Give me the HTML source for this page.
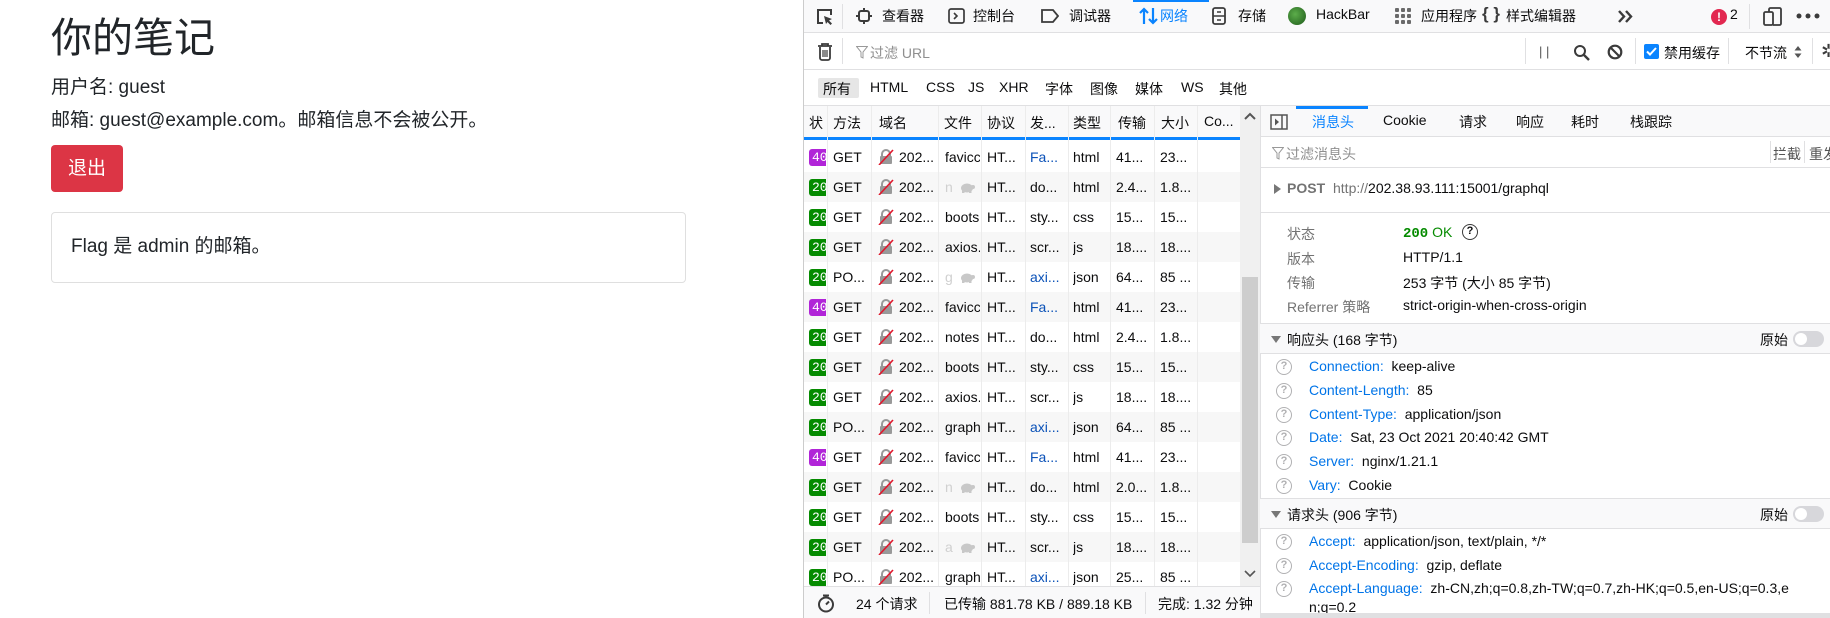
<!DOCTYPE html>
<html><head><meta charset="utf-8">
<style>
*{margin:0;padding:0;box-sizing:border-box}
body{width:1830px;height:618px;overflow:hidden;background:#fff;font-family:"Liberation Sans","Noto Sans CJK SC",sans-serif;color:#0c0c0d;position:relative}
.a{position:absolute;white-space:nowrap}
.l{color:#212529}
#dt{position:absolute;left:803px;top:0;width:1027px;height:618px;border-left:1px solid #ccc;font-size:14px;background:#fff;overflow:hidden}
.bar{position:absolute;left:0;right:0;background:#f9f9fa;border-bottom:1px solid #e0e0e2}
.sep{position:absolute;width:1px;background:#e0e0e2}
.row{position:absolute;left:0;width:436px;height:30px;font-size:14px;line-height:30px}
.row span{position:absolute;top:0;height:30px;overflow:hidden;white-space:nowrap}
.row span.bd{top:7px;height:17px;line-height:17px;color:#fff;font-family:"Liberation Mono",monospace;font-size:13px;border-radius:3px 0 0 3px;padding-left:3px;width:17px}
.cl{position:absolute;top:106px;width:1px;height:480px;background:#ececec}
.sb{position:absolute;left:456px;width:571px}
.q{position:absolute;width:16px;height:16px;border:1.5px solid #b1b1b3;border-radius:50%;color:#b1b1b3;font-size:11px;line-height:13px;text-align:center;font-weight:bold}
.k{color:#0074e8}
</style></head><body>
<div class="a l" style="left:51px;top:14px;font-size:41px;line-height:48px">你的笔记</div>
<div class="a l" style="left:51px;top:76px;font-size:19px;line-height:24px">用户名: guest</div>
<div class="a l" style="left:51px;top:109px;font-size:19px;line-height:24px">邮箱: guest@example.com。邮箱信息不会被公开。</div>
<div class="a" style="left:51px;top:145px;width:72px;height:47px;background:#dc3545;border-radius:4px;color:#fff;font-size:19px;line-height:47px;text-align:center">退出</div>
<div class="a" style="left:51px;top:212px;width:635px;height:71px;border:1px solid #dfdfdf;border-radius:4px"></div>
<div class="a l" style="left:71px;top:235px;font-size:19px;line-height:24px">Flag 是 admin 的邮箱。</div>

<div id="dt">
<div class="bar" style="top:0;height:33px"></div>
<svg class="a" style="left:11px;top:7px" width="20" height="20" viewBox="0 0 20 20"><path d="M8 16H3V3h13v5" fill="none" stroke="#3b3b3b" stroke-width="2"/><path d="M9 9l8 3-3 1.5 3 3-1.5 1.5-3-3L11 17z" fill="#3b3b3b"/></svg>
<div class="sep" style="left:38px;top:4px;height:25px"></div>
<svg class="a" style="left:52px;top:8px" width="16" height="16"><rect x="3" y="3" width="10" height="10" rx="2" fill="none" stroke="#3b3b3b" stroke-width="2"/><path d="M8 0v3M8 13v3M0 8h3M13 8h3" stroke="#3b3b3b" stroke-width="2"/></svg>
<div class="a" style="left:78px;top:6px">查看器</div>
<svg class="a" style="left:144px;top:8px" width="17" height="16"><rect x="1" y="1" width="15" height="14" rx="2" fill="none" stroke="#3b3b3b" stroke-width="1.7"/><path d="M6 5l3 3-3 3" fill="none" stroke="#3b3b3b" stroke-width="1.6"/></svg>
<div class="a" style="left:169px;top:6px">控制台</div>
<svg class="a" style="left:237px;top:8px" width="18" height="16"><path d="M1 2h11l5 6-5 6H1z" fill="none" stroke="#3b3b3b" stroke-width="1.8"/></svg>
<div class="a" style="left:265px;top:6px">调试器</div>
<div class="a" style="left:329px;top:0;width:76px;height:2px;background:#0a84ff"></div>
<svg class="a" style="left:335px;top:7px" width="20" height="18"><path d="M5 17V2M1 6l4-4 4 4M14 1v15M10 12l4 4 4-4" fill="none" stroke="#0a84ff" stroke-width="2.2"/></svg>
<div class="a" style="left:356px;top:6px;color:#0a84ff">网络</div>
<svg class="a" style="left:408px;top:7px" width="14" height="18"><rect x="1" y="1" width="12" height="16" rx="2" fill="none" stroke="#3b3b3b" stroke-width="1.8"/><path d="M1 9h12M5 5h4M5 13h4" stroke="#3b3b3b" stroke-width="1.6"/></svg>
<div class="a" style="left:434px;top:6px">存储</div>
<div class="a" style="left:484px;top:7px;width:18px;height:18px;border-radius:50%;background:radial-gradient(circle at 40% 40%,#5cad4a,#1e5a1a)"></div>
<div class="a" style="left:512px;top:6px">HackBar</div>
<svg class="a" style="left:591px;top:8px" width="16" height="16" fill="#6a6a6a"><rect x="0" y="0" width="4" height="4" rx="1"/><rect x="6" y="0" width="4" height="4" rx="1"/><rect x="12" y="0" width="4" height="4" rx="1"/><rect x="0" y="6" width="4" height="4" rx="1"/><rect x="6" y="6" width="4" height="4" rx="1"/><rect x="12" y="6" width="4" height="4" rx="1"/><rect x="0" y="12" width="4" height="4" rx="1"/><rect x="6" y="12" width="4" height="4" rx="1"/><rect x="12" y="12" width="4" height="4" rx="1"/></svg>
<div class="a" style="left:617px;top:6px">应用程序</div>
<div class="a" style="left:678px;top:4px;font-size:17px;font-weight:bold;color:#3b3b3b">{ }</div>
<div class="a" style="left:702px;top:6px">样式编辑器</div>
<svg class="a" style="left:813px;top:9px" width="16" height="15"><path d="M2 2l5 5.5-5 5.5M9 2l5 5.5-5 5.5" fill="none" stroke="#3b3b3b" stroke-width="2.4"/></svg>
<div class="a" style="left:907px;top:9px;width:16px;height:16px;border-radius:50%;background:#e22850;color:#fff;font-size:12px;font-weight:bold;text-align:center;line-height:16px">!</div>
<div class="a" style="left:926px;top:6px">2</div>
<div class="sep" style="left:945px;top:4px;height:25px"></div>
<svg class="a" style="left:959px;top:7px" width="19" height="19"><rect x="1" y="5" width="9" height="13" rx="1.5" fill="none" stroke="#3b3b3b" stroke-width="1.8"/><path d="M6 5V2.5A1.5 1.5 0 0 1 7.5 1h9A1.5 1.5 0 0 1 18 2.5v14a1.5 1.5 0 0 1-1.5 1.5H10" fill="none" stroke="#3b3b3b" stroke-width="1.8"/></svg>
<svg class="a" style="left:992px;top:13px" width="26" height="6" fill="#3b3b3b"><circle cx="3" cy="3" r="2.5"/><circle cx="12" cy="3" r="2.5"/><circle cx="21" cy="3" r="2.5"/></svg>

<div class="bar" style="top:33px;height:37px;background:#fff"></div>
<svg class="a" style="left:13px;top:42px" width="16" height="19"><path d="M1 4h14M5 4V2h6v2" fill="none" stroke="#3b3b3b" stroke-width="1.8"/><path d="M3 5v11a2 2 0 0 0 2 2h6a2 2 0 0 0 2-2V5" fill="none" stroke="#3b3b3b" stroke-width="1.8"/><path d="M6 8v7M8 8v7M10 8v7" stroke="#3b3b3b" stroke-width="1.2"/></svg>
<div class="sep" style="left:38px;top:38px;height:26px"></div>
<svg class="a" style="left:52px;top:46px" width="12" height="13"><path d="M0.5 0.5h11L7 6v6L5 11V6z" fill="none" stroke="#999" stroke-width="1"/></svg>
<div class="a" style="left:66px;top:43px;color:#8f8f8f">过滤 URL</div>
<div class="sep" style="left:721px;top:38px;height:26px"></div>
<div class="a" style="left:735px;top:44px;color:#555;font-size:13px">| |</div>
<svg class="a" style="left:769px;top:44px" width="17" height="17"><circle cx="7" cy="7" r="5" fill="none" stroke="#3b3b3b" stroke-width="2"/><path d="M11 11l5 5" stroke="#3b3b3b" stroke-width="2.4"/></svg>
<svg class="a" style="left:803px;top:44px" width="16" height="16"><circle cx="8" cy="8" r="6.3" fill="none" stroke="#3b3b3b" stroke-width="2.2"/><path d="M3.5 3.5l9 9" stroke="#3b3b3b" stroke-width="2.2"/></svg>
<div class="sep" style="left:831px;top:38px;height:26px"></div>
<div class="a" style="left:840px;top:44px;width:15px;height:15px;background:#0a84ff;border-radius:2px"><svg width="15" height="15"><path d="M3 7.5l3 3 6-6.5" fill="none" stroke="#fff" stroke-width="2"/></svg></div>
<div class="a" style="left:860px;top:43px">禁用缓存</div>
<div class="sep" style="left:924px;top:38px;height:26px"></div>
<div class="a" style="left:941px;top:43px">不节流</div>
<svg class="a" style="left:990px;top:46px" width="8" height="12" fill="#555"><path d="M4 0l3.5 4.5h-7zM4 12l3.5-4.5h-7z"/></svg>
<div class="sep" style="left:1008px;top:38px;height:26px"></div>
<div class="a" style="left:1017px;top:41px;font-size:18px;color:#3b3b3b">✲</div>

<div class="bar" style="top:70px;height:36px;background:#fff"></div>
<div class="a" style="left:14px;top:78px;width:41px;height:20px;background:#e6e6e6;border-radius:2px"></div>
<div class="a" style="left:19px;top:79px;font-size:14px">所有</div>
<div class="a" style="left:66px;top:79px">HTML</div>
<div class="a" style="left:122px;top:79px">CSS</div>
<div class="a" style="left:164px;top:79px">JS</div>
<div class="a" style="left:195px;top:79px">XHR</div>
<div class="a" style="left:241px;top:79px">字体</div>
<div class="a" style="left:286px;top:79px">图像</div>
<div class="a" style="left:331px;top:79px">媒体</div>
<div class="a" style="left:377px;top:79px">WS</div>
<div class="a" style="left:415px;top:79px">其他</div>

<div class="a" style="left:0;top:106px;width:436px;height:32px;background:#f9f9fa"></div>
<div class="a" style="left:0;top:137px;width:436px;height:3px;background:#0a84ff"></div>
<div class="a" style="left:5px;top:113px;width:14px;overflow:hidden">状</div>
<div class="a" style="left:29px;top:113px">方法</div>
<div class="a" style="left:75px;top:113px">域名</div>
<div class="a" style="left:140px;top:113px">文件</div>
<div class="a" style="left:183px;top:113px">协议</div>
<div class="a" style="left:226px;top:113px">发...</div>
<div class="a" style="left:269px;top:113px">类型</div>
<div class="a" style="left:314px;top:113px">传输</div>
<div class="a" style="left:357px;top:113px">大小</div>
<div class="a" style="left:400px;top:113px">Co...</div>

<div id="rows" class="a" style="left:0;top:140px;width:436px;height:446px;overflow:hidden"></div>
<div class="cl" style="left:23px"></div><div class="cl" style="left:67px"></div><div class="cl" style="left:134px"></div><div class="cl" style="left:177px"></div><div class="cl" style="left:221px"></div><div class="cl" style="left:264px"></div><div class="cl" style="left:306px"></div><div class="cl" style="left:350px"></div><div class="cl" style="left:393px"></div>

<div class="a" style="left:436px;top:106px;width:20px;height:480px;background:#f0f0f0"></div>
<div class="a" style="left:438px;top:277px;width:16px;height:266px;background:#cdcdcd"></div>
<svg class="a" style="left:440px;top:112px" width="12" height="8"><path d="M1 7l5-5 5 5" fill="none" stroke="#555" stroke-width="2"/></svg>
<svg class="a" style="left:440px;top:570px" width="12" height="8"><path d="M1 1l5 5 5-5" fill="none" stroke="#555" stroke-width="1.6"/></svg>

<div class="a" style="left:0;top:586px;width:456px;height:32px;background:#f9f9fa;border-top:1px solid #e0e0e2"></div>
<svg class="a" style="left:13px;top:594px" width="18" height="19"><circle cx="9" cy="10.5" r="7" fill="none" stroke="#3b3b3b" stroke-width="2"/><path d="M6 1.5h6M9 10.5l3-3" stroke="#3b3b3b" stroke-width="2"/></svg>
<div class="a" style="left:52px;top:594px">24 个请求</div>
<div class="sep" style="left:125px;top:592px;height:22px"></div>
<div class="a" style="left:140px;top:594px">已传输 881.78 KB / 889.18 KB</div>
<div class="sep" style="left:341px;top:592px;height:22px"></div>
<div class="a" style="left:354px;top:594px">完成: 1.32 分钟</div>

<div class="sb" style="top:106px;height:512px;border-left:1px solid #e0e0e2;background:#fff"></div>
<div class="sb" style="top:106px;height:31px;background:#f9f9fa;border-bottom:1px solid #e0e0e2;border-left:1px solid #e0e0e2"></div>
<svg class="a" style="left:466px;top:114px" width="18" height="16"><rect x="1" y="1" width="16" height="14" fill="none" stroke="#555" stroke-width="1.5"/><path d="M12 1v14" stroke="#555" stroke-width="1.5"/><path d="M5 4.5l4 3.5-4 3.5z" fill="#555"/></svg>
<div class="a" style="left:492px;top:106px;width:72px;height:3px;background:#0a84ff"></div>
<div class="a" style="left:508px;top:112px;color:#0a84ff">消息头</div>
<div class="a" style="left:579px;top:112px">Cookie</div>
<div class="a" style="left:655px;top:112px">请求</div>
<div class="a" style="left:712px;top:112px">响应</div>
<div class="a" style="left:767px;top:112px">耗时</div>
<div class="a" style="left:826px;top:112px">栈跟踪</div>
<div class="sb" style="top:137px;height:31px;border-bottom:1px solid #e0e0e2;border-left:1px solid #e0e0e2"></div>
<svg class="a" style="left:468px;top:147px" width="12" height="13"><path d="M0.5 0.5h11L7 6v6L5 11V6z" fill="none" stroke="#999" stroke-width="1"/></svg>
<div class="a" style="left:482px;top:144px;color:#8f8f8f">过滤消息头</div>
<div class="sep" style="left:966px;top:141px;height:22px"></div>
<div class="a" style="left:969px;top:144px;color:#555">拦截</div>
<div class="sep" style="left:1000px;top:141px;height:22px"></div>
<div class="a" style="left:1005px;top:144px;color:#555">重发</div>
<div class="sb" style="top:168px;height:45px;border-bottom:1px solid #e0e0e2;border-left:1px solid #e0e0e2"></div>
<svg class="a" style="left:470px;top:184px" width="7" height="10"><path d="M0 0l7 5-7 5z" fill="#777"/></svg>
<div class="a" style="left:483px;top:180px;font-weight:bold;color:#737373">POST</div>
<div class="a" style="left:529px;top:180px;color:#737373">http://<span style="color:#0c0c0d">202.38.93.111:15001/graphql</span></div>
<div class="a" style="left:483px;top:224px;color:#737373">状态</div>
<div class="a" style="left:599px;top:224px;color:#058b00"><span style="font-family:'Liberation Mono',monospace;font-weight:bold">200</span> OK</div>
<div class="a" style="left:658px;top:224px;width:16px;height:16px;border:1.6px solid #3b3b3b;border-radius:50%;font-size:11px;font-weight:bold;text-align:center;line-height:13px">?</div>
<div class="a" style="left:483px;top:249px;color:#737373">版本</div>
<div class="a" style="left:599px;top:249px">HTTP/1.1</div>
<div class="a" style="left:483px;top:273px;color:#737373">传输</div>
<div class="a" style="left:599px;top:273px">253 字节 (大小 85 字节)</div>
<div class="a" style="left:483px;top:297px;color:#737373">Referrer 策略</div>
<div class="a" style="left:599px;top:297px">strict-origin-when-cross-origin</div>

<div class="sb" style="top:323px;height:31px;background:#f9f9fa;border-top:1px solid #e0e0e2;border-bottom:1px solid #e0e0e2"></div>
<svg class="a" style="left:467px;top:336px" width="10" height="7"><path d="M0 0h10l-5 7z" fill="#777"/></svg>
<div class="a" style="left:483px;top:330px">响应头 (168 字节)</div>
<div class="a" style="left:956px;top:330px">原始</div>
<div class="a" style="left:989px;top:331px;width:31px;height:16px;border-radius:8px;background:#d7d7db"><div style="position:absolute;left:2px;top:2px;width:12px;height:12px;border-radius:50%;background:#fff"></div></div>

<div class="sb" style="top:498px;height:31px;background:#f9f9fa;border-top:1px solid #e0e0e2;border-bottom:1px solid #e0e0e2"></div>
<svg class="a" style="left:467px;top:511px" width="10" height="7"><path d="M0 0h10l-5 7z" fill="#777"/></svg>
<div class="a" style="left:483px;top:505px">请求头 (906 字节)</div>
<div class="a" style="left:956px;top:505px">原始</div>
<div class="a" style="left:989px;top:506px;width:31px;height:16px;border-radius:8px;background:#d7d7db"><div style="position:absolute;left:2px;top:2px;width:12px;height:12px;border-radius:50%;background:#fff"></div></div>

<div class="q" style="left:472px;top:359px">?</div><div class="a" style="left:505px;top:358px"><span class="k">Connection:</span>&nbsp; keep-alive</div>
<div class="q" style="left:472px;top:383px">?</div><div class="a" style="left:505px;top:382px"><span class="k">Content-Length:</span>&nbsp; 85</div>
<div class="q" style="left:472px;top:407px">?</div><div class="a" style="left:505px;top:406px"><span class="k">Content-Type:</span>&nbsp; application/json</div>
<div class="q" style="left:472px;top:430px">?</div><div class="a" style="left:505px;top:429px"><span class="k">Date:</span>&nbsp; Sat, 23 Oct 2021 20:40:42 GMT</div>
<div class="q" style="left:472px;top:454px">?</div><div class="a" style="left:505px;top:453px"><span class="k">Server:</span>&nbsp; nginx/1.21.1</div>
<div class="q" style="left:472px;top:478px">?</div><div class="a" style="left:505px;top:477px"><span class="k">Vary:</span>&nbsp; Cookie</div>
<div class="q" style="left:472px;top:534px">?</div><div class="a" style="left:505px;top:533px"><span class="k">Accept:</span>&nbsp; application/json, text/plain, */*</div>
<div class="q" style="left:472px;top:558px">?</div><div class="a" style="left:505px;top:557px"><span class="k">Accept-Encoding:</span>&nbsp; gzip, deflate</div>
<div class="q" style="left:472px;top:581px">?</div><div class="a" style="left:505px;top:580px"><span class="k">Accept-Language:</span>&nbsp; zh-CN,zh;q=0.8,zh-TW;q=0.7,zh-HK;q=0.5,en-US;q=0.3,e</div>
<div class="a" style="left:505px;top:599px">n;q=0.2</div>
<div class="sb" style="top:613px;height:5px;background:#e0e0e2"></div>
</div>

<script>
var R=[["40","GET","favicc","Fa...","html","41...","23...",0,1],["20","GET","n","do...","html","2.4...","1.8...",1,0],["20","GET","boots","sty...","css","15...","15...",0,0],["20","GET","axios.","scr...","js","18....","18....",0,0],["20","PO...","g","axi...","json","64...","85 ...",1,1],["40","GET","favicc","Fa...","html","41...","23...",0,1],["20","GET","notes","do...","html","2.4...","1.8...",0,0],["20","GET","boots","sty...","css","15...","15...",0,0],["20","GET","axios.","scr...","js","18....","18....",0,0],["20","PO...","graph","axi...","json","64...","85 ...",0,1],["40","GET","favicc","Fa...","html","41...","23...",0,1],["20","GET","n","do...","html","2.0...","1.8...",1,0],["20","GET","boots","sty...","css","15...","15...",0,0],["20","GET","a","scr...","js","18....","18....",1,0],["20","PO...","graph","axi...","json","25...","85 ...",0,1]];
var h="";
var lock='<svg width="16" height="16" style="position:absolute;left:0;top:7px"><path d="M4 7V5a4 4 0 0 1 8 0v2" fill="none" stroke="#999" stroke-width="2"/><rect x="2" y="7" width="12" height="8" rx="1" fill="#999"/><path d="M1 16L15 1" stroke="#e0182d" stroke-width="1.6"/></svg>';
var turtle='<svg width="16" height="11" style="position:absolute;left:14px;top:10px"><ellipse cx="8" cy="6" rx="6" ry="4.5" fill="#c8c8c8"/><circle cx="14" cy="5" r="2" fill="#c8c8c8"/><rect x="3" y="8" width="2.5" height="3" fill="#c8c8c8"/><rect x="10" y="8" width="2.5" height="3" fill="#c8c8c8"/></svg>';
R.forEach(function(r,i){
var bg=i%2?"#f7f7f7":"#fff";
var bc=r[0]=="40"?"#b124d8":"#058b00";
var f=r[7]?'<span style="left:141px;width:36px;color:#d0d0d0">'+r[2]+turtle+'</span>':'<span style="left:141px;width:35px">'+r[2]+'</span>';
h+='<div class="row" style="top:'+(i*30+2)+'px;background:'+bg+'"><span class="bd" style="left:5px;background:'+bc+'">'+r[0]+'</span><span style="left:29px;width:37px">'+r[1]+'</span><span style="left:74px;width:60px">'+lock+'<i style="font-style:normal;position:absolute;left:21px;top:0">202...</i></span>'+f+'<span style="left:183px">HT...</span><span style="left:226px;color:'+(r[8]?'#0b52b8':'#0c0c0d')+'">'+r[3]+'</span><span style="left:269px">'+r[4]+'</span><span style="left:312px">'+r[5]+'</span><span style="left:356px">'+r[6]+'</span></div>';
});
document.getElementById("rows").innerHTML=h;
</script>
</body></html>
